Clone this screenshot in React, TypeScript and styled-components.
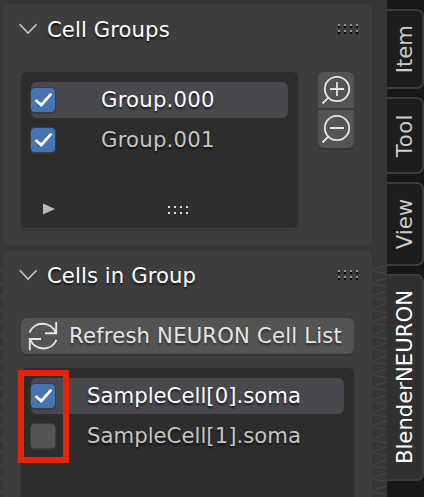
import React from 'react';
import styled, { createGlobalStyle } from 'styled-components';

const GlobalStyle = createGlobalStyle`
  * { box-sizing: border-box; }
  body { margin: 0; background: #363636; overflow: hidden; }
`;

const Screen = styled.div`
  position: relative;
  display: flex;
  width: 424px;
  height: 497px;
  overflow: hidden;
  background: #363636;
  font-family: 'DejaVu Sans', sans-serif;
  font-size: 21.2px;
  color: #fff;
`;

const Texture = styled.svg<{ $x: number }>`
  position: absolute;
  left: ${(p) => p.$x}px;
  top: 262px;
`;

const Panels = styled.main`
  position: relative;
  flex: none;
  width: 387px;
  padding: 4px 15px 0 3px;
  display: flex;
  flex-direction: column;
  gap: 4px;
`;

const Panel = styled.section<{ $height: number }>`
  position: relative;
  flex: none;
  height: ${(p) => p.$height}px;
  padding: 0 18px;
  border-radius: 7px;
  background: #3d3d3d;
`;

const Header = styled.header<{ $height: number }>`
  display: flex;
  align-items: flex-start;
  height: ${(p) => p.$height}px;
  padding-top: 12px;
  margin: 0 -5px 0 -2px;
  svg { flex: none; }
`;

const Title = styled.h2`
  flex: 1;
  margin: 1px 0 0 9px;
  font-size: inherit;
  font-weight: 400;
  letter-spacing: 0.08px;
  line-height: 26px;
  white-space: nowrap;
  text-shadow: 0 2px 2px rgba(0, 0, 0, 0.65);
`;

const Body = styled.div`
  display: flex;
  gap: 20px;
`;

const List = styled.div<{ $width: number; $height: number }>`
  display: flex;
  flex-direction: column;
  width: ${(p) => p.$width}px;
  height: ${(p) => p.$height}px;
  padding: 10px;
  gap: 4px;
  border-radius: 6px;
  background: #2d2d2d;
  box-shadow: 0 1px #414141, 0 2px 0 1px #373737;
`;

const Row = styled.div<{ $selected?: boolean }>`
  display: flex;
  flex: none;
  align-items: center;
  height: 36px;
  border-radius: 6px;
  background: ${(p) => (p.$selected ? '#48494f' : 'transparent')};
  color: ${(p) => (p.$selected ? '#fff' : '#c5c5c5')};
`;

const Check = styled.span<{ $on?: boolean }>`
  flex: none;
  width: 24px;
  height: 24px;
  border-radius: 4px;
  background: ${(p) => (p.$on ? '#4772b3' : '#545454')};
  box-shadow: 0 0 0 1px #3c3d3f, 0 1px 0 1px #3b3b3c;
  svg { display: block; }
`;

const RowLabel = styled.span<{ $indent: number; $tracking?: number }>`
  margin-left: ${(p) => p.$indent}px;
  letter-spacing: ${(p) => p.$tracking ?? 0.03}px;
  line-height: 26px;
  white-space: nowrap;
  text-shadow: 0 2px 2px rgba(0, 0, 0, 0.65);
`;

const ListFooter = styled.div`
  display: flex;
  align-items: center;
  height: 16px;
  margin-top: 39px;
  padding-left: 12px;
  gap: 112px;
`;

const ButtonStack = styled.div`
  display: flex;
  flex-direction: column;
  gap: 2px;
  width: 36px;
  height: 76px;
  border-radius: 6px;
  box-shadow: 0 2px #363636;
`;

const IconButton = styled.button<{ $last?: boolean }>`
  width: 36px;
  height: ${(p) => (p.$last ? 38 : 36)}px;
  padding: 0;
  border: 0;
  border-radius: ${(p) => (p.$last ? '0 0 6px 6px' : '6px 6px 0 0')};
  background: #545454;
  svg { display: block; margin-top: ${(p) => (p.$last ? -1 : 0)}px; }
`;

const RefreshButton = styled.button`
  display: flex;
  align-items: center;
  width: 333px;
  height: 36px;
  margin: 0 0 14px;
  padding: 0 0 0 5px;
  gap: 9px;
  border: 0;
  border-radius: 6px;
  background: #545454;
  box-shadow: 0 2px #363636;
  color: #e5e5e5;
  font: inherit;
  letter-spacing: 0.17px;
  line-height: 26px;
  white-space: nowrap;
  text-shadow: 0 2px 2px rgba(0, 0, 0, 0.45);
  svg { flex: none; }
`;

const Tabs = styled.nav`
  position: relative;
  flex: none;
  width: 37px;
  padding-top: 9px;
  display: flex;
  flex-direction: column;
  gap: 8px;
  background: #181818;
`;

const Tab = styled.div<{ $height: number; $active?: boolean }>`
  flex: none;
  display: flex;
  align-items: center;
  justify-content: center;
  width: 37px;
  height: ${(p) => p.$height}px;
  border: 2px solid #3c3c3c;
  border-left: 0;
  border-radius: 0 7px 7px 0;
  background: ${(p) => (p.$active ? '#303030' : '#1d1d1d')};
  color: ${(p) => (p.$active ? '#fff' : '#cccccc')};
`;

const TabLabel = styled.span<{ $tracking?: number }>`
  writing-mode: vertical-rl;
  transform: rotate(180deg);
  letter-spacing: ${(p) => p.$tracking ?? 0}px;
  line-height: 26px;
  white-space: nowrap;
`;

const Highlight = styled.div`
  position: absolute;
  left: 18px;
  top: 370px;
  width: 51px;
  height: 93px;
  border: 6px solid #e42500;
`;

const Chevron = () => (
  <svg width="19" height="26" viewBox="0 0 19 26" fill="none" stroke="#c4c4c4" strokeWidth="1.6">
    <path d="M0.6 8.3L9.1 17L17.6 8.3" />
  </svg>
);

const columns = [0, 6, 12, 18];

const HeaderGrip = () => (
  <svg width="21" height="26" viewBox="0 0 21 26" shapeRendering="crispEdges">
    {columns.map((x) => (
      <g key={x}>
        <path fill="#929292" d={`M${x} 8h2v2h-2zM${x} 14h2v2h-2z`} />
        <path fill="#050505" d={`M${x} 10h2v2h-2zM${x} 16h2v2h-2z`} />
      </g>
    ))}
  </svg>
);

const ListGrip = () => (
  <svg width="22" height="10" viewBox="0 0 22 10" shapeRendering="crispEdges">
    {columns.map((x) => (
      <path key={x} fill="#dedede" d={`M${x + 1} 0h2v2h-2zM${x + 1} 6h2v2h-2z`} transform="translate(0 2)" />
    ))}
  </svg>
);

const Checkbox = ({ on }: { on?: boolean }) => (
  <Check $on={on}>
    {on && (
      <svg width="24" height="24" viewBox="0 0 24 24" fill="none" stroke="#fff" strokeWidth="2.8">
        <path d="M4.6 12L10.3 17L20.4 5.6" />
      </svg>
    )}
  </Check>
);

const Magnifier = ({ plus }: { plus?: boolean }) => (
  <svg width="36" height="36" viewBox="0 0 36 36" fill="none" stroke="#e6e6e6" strokeWidth="1.8">
    <circle cx="19" cy="17" r="12.2" />
    <path d="M10.3 25.7L4.5 31.5M12 17h14" />
    {plus && <path d="M19 10v14" />}
  </svg>
);

const RefreshIcon = () => (
  <svg width="34" height="36" viewBox="0 0 34 36" fill="none" stroke="#e5e5e5" strokeWidth="1.9">
    <path d="M3.5 14.4A14.2 14.2 0 0 1 29.8 14.8M19 15.2H30.2V4" />
    <path d="M30.5 21.8A14.2 14.2 0 0 1 4.2 21.4M15 21H3.8V32.2" />
  </svg>
);

const strokes = Array.from({ length: 19 }, (_, i) => {
  const y = i * 13;
  return `M-1 ${y + 8}L17 ${y + 2}M-1 ${y + 9}L17 ${y + 12}`;
}).join('');

const Scribble = ({ x }: { x: number }) => (
  <Texture $x={x} width={x ? 15 : 3} height="235" fill="none" stroke="#454545" strokeWidth="1.4" opacity="0.8">
    <path d={strokes} />
  </Texture>
);

export default function App() {
  return (
    <>
      <GlobalStyle />
      <Screen>
        <Scribble x={0} />
        <Scribble x={372} />
        <Panels>
          <Panel $height={242}>
            <Header $height={68}>
              <Chevron />
              <Title>Cell Groups</Title>
              <HeaderGrip />
            </Header>
            <Body>
              <List $width={277} $height={156}>
                <Row $selected>
                  <Checkbox on />
                  <RowLabel $indent={46} $tracking={0.22}>Group.000</RowLabel>
                </Row>
                <Row>
                  <Checkbox on />
                  <RowLabel $indent={46} $tracking={0.22}>Group.001</RowLabel>
                </Row>
                <ListFooter>
                  <svg width="12" height="12" viewBox="0 0 12 12">
                    <path d="M0 0.5L12 6L0 11.5Z" fill="#b9b9b9" />
                  </svg>
                  <ListGrip />
                </ListFooter>
              </List>
              <ButtonStack>
                <IconButton aria-label="Add group"><Magnifier plus /></IconButton>
                <IconButton $last aria-label="Remove group"><Magnifier /></IconButton>
              </ButtonStack>
            </Body>
          </Panel>
          <Panel $height={260}>
            <Header $height={68}>
              <Chevron />
              <Title>Cells in Group</Title>
              <HeaderGrip />
            </Header>
            <RefreshButton>
              <RefreshIcon />
              Refresh NEURON Cell List
            </RefreshButton>
            <List $width={333} $height={150}>
              <Row $selected>
                <Checkbox on />
                <RowLabel $indent={32}>SampleCell[0].soma</RowLabel>
              </Row>
              <Row>
                <Checkbox />
                <RowLabel $indent={32}>SampleCell[1].soma</RowLabel>
              </Row>
            </List>
          </Panel>
        </Panels>
        <Tabs>
          <Tab $height={80}><TabLabel>Item</TabLabel></Tab>
          <Tab $height={77}><TabLabel $tracking={0.5}>Tool</TabLabel></Tab>
          <Tab $height={84}><TabLabel>View</TabLabel></Tab>
          <Tab $height={207} $active><TabLabel>BlenderNEURON</TabLabel></Tab>
        </Tabs>
        <Highlight />
      </Screen>
    </>
  );
}
